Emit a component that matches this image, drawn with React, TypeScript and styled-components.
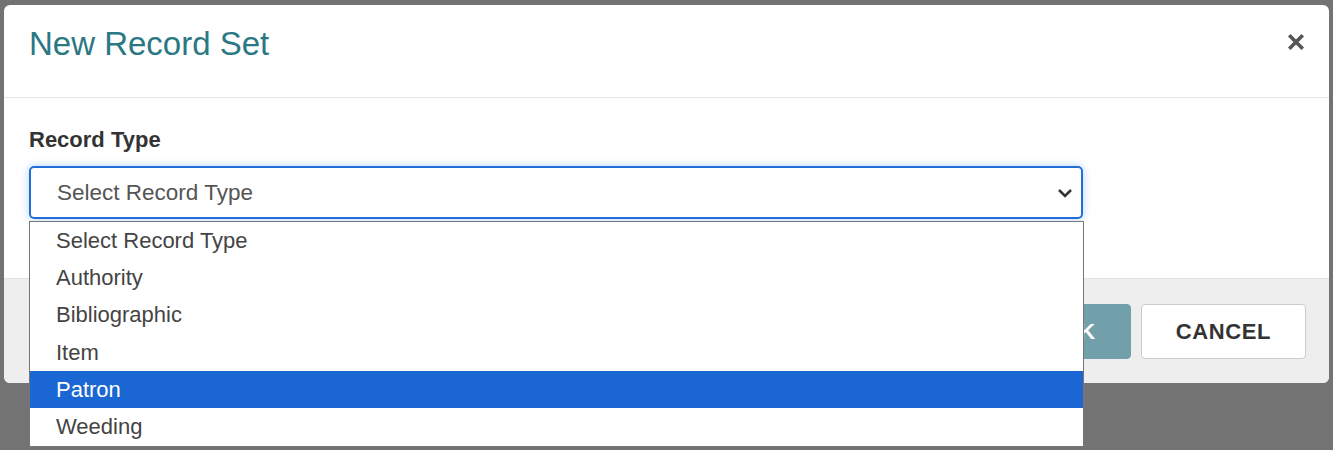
import React from "react";
import styled, { createGlobalStyle } from "styled-components";

const Global = createGlobalStyle`
  html, body {
    margin: 0;
    padding: 0;
    height: 100%;
    overflow: hidden;
    background: #737373;
    font-family: "Liberation Sans", Arial, sans-serif;
  }
  #root { height: 100%; }
`;

const Modal = styled.div`
  margin: 5px 4px 0 4px;
  background: #ffffff;
  border-radius: 6px;
  box-sizing: border-box;
  height: 378px;
  display: flex;
  flex-direction: column;
  overflow: visible;
`;

const Header = styled.div`
  display: flex;
  justify-content: space-between;
  align-items: flex-start;
  height: 93px;
  box-sizing: border-box;
  padding: 21px 24px 0 25px;
  border-bottom: 1px solid #e5e5e5;
`;

const Title = styled.h1`
  margin: 0;
  font-size: 33px;
  line-height: 36px;
  font-weight: 400;
  color: #2b7885;
`;

const CloseButton = styled.button`
  border: 0;
  background: none;
  padding: 0;
  margin-top: 7px;
  width: 18px;
  height: 18px;
  display: flex;
  align-items: center;
  justify-content: center;
  cursor: pointer;
`;

const Body = styled.div`
  height: 180px;
  box-sizing: border-box;
  padding: 29px 246px 0 25px;
`;

const Label = styled.label`
  display: block;
  font-size: 22px;
  line-height: 26px;
  font-weight: 700;
  color: #333333;
  margin-bottom: 13px;
`;

const SelectWrap = styled.div`
  position: relative;
`;

const SelectBox = styled.div`
  height: 53px;
  box-sizing: border-box;
  border: 2px solid #1f6fd6;
  border-radius: 5px;
  box-shadow: 0 0 8px rgba(80, 150, 240, 0.45);
  display: flex;
  align-items: center;
  justify-content: space-between;
  padding: 0 8px 0 26px;
  font-size: 22.5px;
  color: #555555;
`;

const OptionList = styled.ul`
  position: absolute;
  top: calc(100% + 2px);
  left: 0;
  right: -1px;
  margin: 0;
  padding: 0;
  list-style: none;
  background: #ffffff;
  border: 1px solid #767676;
  z-index: 10;
`;

const Option = styled.li<{ $active?: boolean }>`
  height: 37.3px;
  display: flex;
  align-items: center;
  padding-left: 26px;
  font-size: 22px;
  color: ${(p) => (p.$active ? "#ffffff" : "#444444")};
  background: ${(p) => (p.$active ? "#1a66d2" : "transparent")};
`;

const Footer = styled.div`
  flex: 1;
  background: #eeeeee;
  border-top: 1px solid #e2e2e2;
  border-radius: 0 0 6px 6px;
  display: flex;
  justify-content: flex-end;
  align-items: flex-start;
  gap: 10px;
  padding: 25px 23px 0 0;
`;

const Button = styled.button<{ $primary?: boolean }>`
  height: 55px;
  box-sizing: border-box;
  border-radius: 4px;
  font-family: "Liberation Sans", Arial, sans-serif;
  font-size: 22px;
  font-weight: 700;
  letter-spacing: 0.6px;
  padding: 0 34px;
  cursor: pointer;
  color: ${(p) => (p.$primary ? "#ffffff" : "#333333")};
  background: ${(p) => (p.$primary ? "#72a0aa" : "#ffffff")};
  border: 1px solid ${(p) => (p.$primary ? "#72a0aa" : "#cccccc")};
`;

const options = ["Select Record Type", "Authority", "Bibliographic", "Item", "Patron", "Weeding"];

export default function App() {
  return (
    <>
      <Global />
      <Modal>
        <Header>
          <Title>New Record Set</Title>
          <CloseButton aria-label="Close">
            <svg width="16" height="16" viewBox="0 0 16 16">
              <path d="M2.5 2.5 L13.5 13.5 M13.5 2.5 L2.5 13.5" stroke="#555555" strokeWidth="3.6" strokeLinecap="square" />
            </svg>
          </CloseButton>
        </Header>
        <Body>
          <Label>Record Type</Label>
          <SelectWrap>
            <SelectBox>
              <span>Select Record Type</span>
              <svg width="16" height="12" viewBox="0 0 16 12">
                <path d="M2 3 L8 9 L14 3" fill="none" stroke="#333333" strokeWidth="2.6" />
              </svg>
            </SelectBox>
            <OptionList>
              {options.map((o) => (
                <Option key={o} $active={o === "Patron"}>
                  {o}
                </Option>
              ))}
            </OptionList>
          </SelectWrap>
        </Body>
        <Footer>
          <Button $primary>OK</Button>
          <Button>CANCEL</Button>
        </Footer>
      </Modal>
    </>
  );
}
